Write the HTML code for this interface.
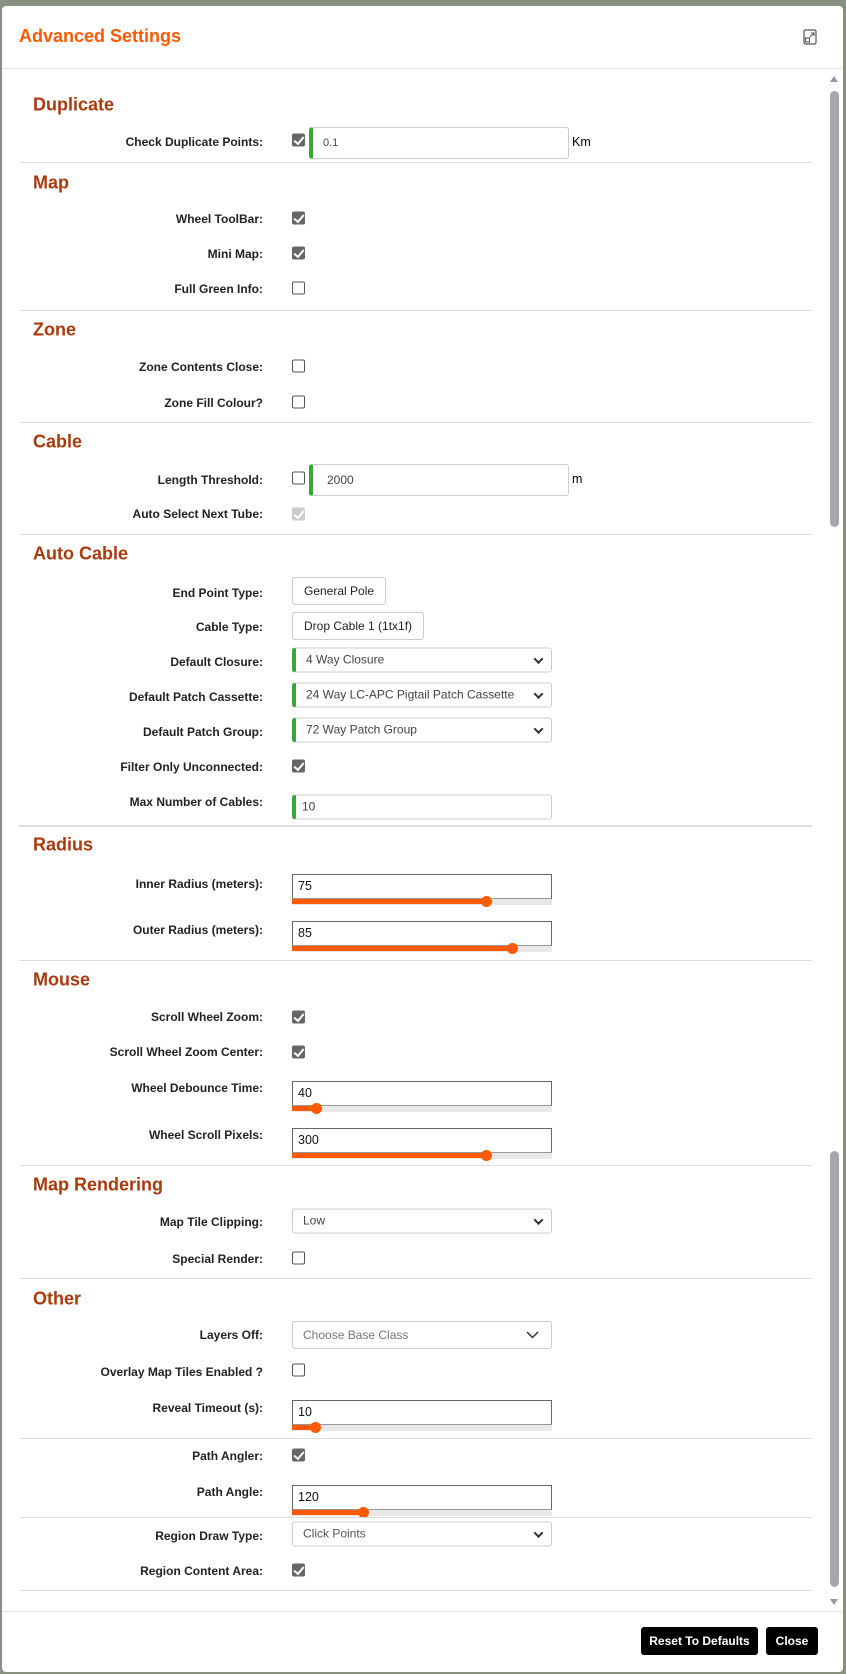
<!DOCTYPE html>
<html><head><meta charset="utf-8"><style>
*{box-sizing:border-box;margin:0;padding:0}
body{width:846px;height:1674px;background:#8a9080;font-family:"Liberation Sans",Arial,sans-serif;position:relative;overflow:hidden}
#m{position:absolute;left:2px;top:6px;width:841px;height:1666px;background:#fff;border-radius:4px}
#w{position:absolute;left:0;top:0;width:846px;height:1674px}
.a{position:absolute}
.t{left:17px;top:20px;font-size:18px;font-weight:bold;color:#ff5a00}
.hl{position:absolute;left:0;width:841px;height:1px;background:#e3e3e3}
.sl{position:absolute;left:17px;width:793px;height:1px;background:#ddd}
.h{position:absolute;left:33px;font-size:18px;font-weight:bold;color:#a83a0c;transform:translateY(-50%);white-space:nowrap}
.l{position:absolute;right:583px;font-size:12px;font-weight:bold;color:#222;transform:translateY(-50%);white-space:nowrap}
.c{position:absolute;left:292px;width:13px;height:13px;border:1px solid #555;border-radius:2px;background:#fff;transform:translateY(-50%)}
.c.k{background:#666;border-color:#666}
.c.k::after{content:"";position:absolute;left:3px;top:0px;width:4px;height:8px;border:solid #fff;border-width:0 2px 2px 0;transform:rotate(40deg)}
.i{position:absolute;left:292px;width:260px;height:25px;border:1px solid #ccc;border-radius:3px;font-size:12px;color:#444;padding-left:10px;line-height:23px;transform:translateY(-50%);white-space:nowrap}
.g{border-left:4px solid #3aa53a}
.sel::after{content:"";position:absolute;right:9px;top:7px;width:5px;height:5px;border:solid #333;border-width:0 2px 2px 0;transform:rotate(45deg)}
.b{position:absolute;left:292px;height:28px;border:1px solid #ccc;border-radius:3px;font-size:12px;color:#222;padding:0 11px;line-height:26px;transform:translateY(-50%);white-space:nowrap}
.r{position:absolute;left:292px;width:260px}
.r .bx{height:25px;border:1px solid #666;border-bottom:1px solid #999;font-size:12.5px;color:#111;padding-left:5px;line-height:23px;background:#fff}
.r .tr{height:6px;background:#e8e8e8;position:relative}
.r .fl{position:absolute;left:0;top:0;height:5px;background:#ff5a00}
.r .th{position:absolute;top:-3px;width:11px;height:11px;border-radius:50%;background:#ff5a00;margin-left:-5px}
.btn{position:absolute;top:1627px;height:28px;background:#000;color:#fff;font-size:12px;font-weight:bold;border-radius:3px;line-height:28px;text-align:center;white-space:nowrap}
</style></head><body>
<div id="m">
<div class="a t">Advanced Settings</div>
<svg class="a" style="left:801px;top:23px" width="14" height="16" viewBox="0 0 14 16"><rect x="1" y="1" width="12" height="14" rx="1.5" fill="none" stroke="#555" stroke-width="1.2"/><rect x="2.5" y="9" width="4" height="4" fill="none" stroke="#555" stroke-width="1.1"/><path d="M7 8L11 4M8 4h3v3" fill="none" stroke="#555" stroke-width="1.1"/></svg>
<div class="hl" style="top:62px"></div>
<div class="a" style="left:828px;top:70px;width:0;height:0;border:4px solid transparent;border-bottom:6px solid #999;border-top:0"></div>
<div class="a" style="left:828px;top:85px;width:9px;height:436px;background:#a8a8a8;border-radius:5px"></div>
<div class="a" style="left:828px;top:1145px;width:9px;height:436px;background:#a8a8a8;border-radius:5px"></div>
<div class="a" style="left:828px;top:1593px;width:0;height:0;border:4px solid transparent;border-top:6px solid #999;border-bottom:0"></div>
</div>
<div id="w">
<div class="h" style="top:105px">Duplicate</div>
<div class="l" style="top:142px">Check Duplicate Points:</div><div class="c k" style="top:140px"></div>
<div class="i g" style="left:309px;width:260px;height:32px;line-height:30px;top:143px;font-size:11px">0.1</div><div class="a" style="left:572px;top:135px;font-size:12.5px">Km</div>
<div class="sl" style="top:162px;left:19px"></div>
<div class="h" style="top:183px">Map</div>
<div class="l" style="top:219px">Wheel ToolBar:</div><div class="c k" style="top:218px"></div>
<div class="l" style="top:254px">Mini Map:</div><div class="c k" style="top:253px"></div>
<div class="l" style="top:289px">Full Green Info:</div><div class="c" style="top:288px"></div>
<div class="sl" style="top:310px;left:19px"></div>
<div class="h" style="top:330px">Zone</div>
<div class="l" style="top:367px">Zone Contents Close:</div><div class="c" style="top:366px"></div>
<div class="l" style="top:403px">Zone Fill Colour?</div><div class="c" style="top:402px"></div>
<div class="sl" style="top:422px;left:19px"></div>
<div class="h" style="top:442px">Cable</div>
<div class="l" style="top:480px">Length Threshold:</div><div class="c" style="top:478px"></div>
<div class="i g" style="left:309px;width:260px;height:32px;line-height:30px;top:480px;padding-left:14px">2000</div><div class="a" style="left:572px;top:472px;font-size:12.5px">m</div>
<div class="l" style="top:514px">Auto Select Next Tube:</div><div class="c k" style="top:514px;background:#ccc;border-color:#ccc"></div>
<div class="sl" style="top:534px;left:19px"></div>
<div class="h" style="top:554px">Auto Cable</div>
<div class="l" style="top:593px">End Point Type:</div><div class="b" style="top:591px">General Pole</div>
<div class="l" style="top:627px">Cable Type:</div><div class="b" style="top:626px">Drop Cable 1 (1tx1f)</div>
<div class="l" style="top:662px">Default Closure:</div><div class="i g sel" style="top:660px">4 Way Closure</div>
<div class="l" style="top:697px">Default Patch Cassette:</div><div class="i g sel" style="top:695px">24 Way LC-APC Pigtail Patch Cassette</div>
<div class="l" style="top:732px">Default Patch Group:</div><div class="i g sel" style="top:730px">72 Way Patch Group</div>
<div class="l" style="top:767px">Filter Only Unconnected:</div><div class="c k" style="top:766px"></div>
<div class="l" style="top:802px">Max Number of Cables:</div><div class="i g" style="top:807px;padding-left:6px">10</div>
<div class="sl" style="top:825px;left:19px;height:2px"></div>
<div class="h" style="top:845px">Radius</div>
<div class="l" style="top:884px">Inner Radius (meters):</div>
<div class="r" style="top:874px"><div class="bx">75</div><div class="tr"><div class="fl" style="width:194px"></div><div class="th" style="left:194px"></div></div></div>
<div class="l" style="top:930px">Outer Radius (meters):</div>
<div class="r" style="top:921px"><div class="bx">85</div><div class="tr"><div class="fl" style="width:220px"></div><div class="th" style="left:220px"></div></div></div>
<div class="sl" style="top:960px;left:19px"></div>
<div class="h" style="top:980px">Mouse</div>
<div class="l" style="top:1017px">Scroll Wheel Zoom:</div><div class="c k" style="top:1017px"></div>
<div class="l" style="top:1052px">Scroll Wheel Zoom Center:</div><div class="c k" style="top:1052px"></div>
<div class="l" style="top:1088px">Wheel Debounce Time:</div>
<div class="r" style="top:1081px"><div class="bx">40</div><div class="tr"><div class="fl" style="width:24px"></div><div class="th" style="left:24px"></div></div></div>
<div class="l" style="top:1135px">Wheel Scroll Pixels:</div>
<div class="r" style="top:1128px"><div class="bx">300</div><div class="tr"><div class="fl" style="width:194px"></div><div class="th" style="left:194px"></div></div></div>
<div class="sl" style="top:1165px;left:19px"></div>
<div class="h" style="top:1185px">Map Rendering</div>
<div class="l" style="top:1222px">Map Tile Clipping:</div><div class="i sel" style="top:1221px">Low</div>
<div class="l" style="top:1259px">Special Render:</div><div class="c" style="top:1258px"></div>
<div class="sl" style="top:1278px;left:19px"></div>
<div class="h" style="top:1299px">Other</div>
<div class="l" style="top:1335px">Layers Off:</div>
<div class="i" style="top:1335px;height:28px;line-height:26px;color:#777">Choose Base Class<svg style="position:absolute;right:12px;top:9px" width="13" height="8" viewBox="0 0 13 8"><path d="M1 1l5.5 5.5L12 1" fill="none" stroke="#333" stroke-width="1.5"/></svg></div>
<div class="l" style="top:1372px">Overlay Map Tiles Enabled ?</div><div class="c" style="top:1370px"></div>
<div class="l" style="top:1408px">Reveal Timeout (s):</div>
<div class="r" style="top:1400px"><div class="bx">10</div><div class="tr"><div class="fl" style="width:23px"></div><div class="th" style="left:23px"></div></div></div>
<div class="sl" style="top:1438px;left:19px"></div>
<div class="l" style="top:1456px">Path Angler:</div><div class="c k" style="top:1455px"></div>
<div class="l" style="top:1492px">Path Angle:</div>
<div class="r" style="top:1485px"><div class="bx">120</div><div class="tr"><div class="fl" style="width:71px"></div><div class="th" style="left:71px"></div></div></div>
<div class="sl" style="top:1517px;left:19px"></div>
<div class="l" style="top:1536px">Region Draw Type:</div><div class="i sel" style="top:1534px;color:#555">Click Points</div>
<div class="l" style="top:1571px">Region Content Area:</div><div class="c k" style="top:1570px"></div>
<div class="sl" style="top:1590px;left:19px"></div>
<div class="hl" style="top:1611px;left:2px"></div>
<div class="btn" style="left:641px;width:117px">Reset To Defaults</div>
<div class="btn" style="left:766px;width:52px">Close</div>
</div>
</body></html>
